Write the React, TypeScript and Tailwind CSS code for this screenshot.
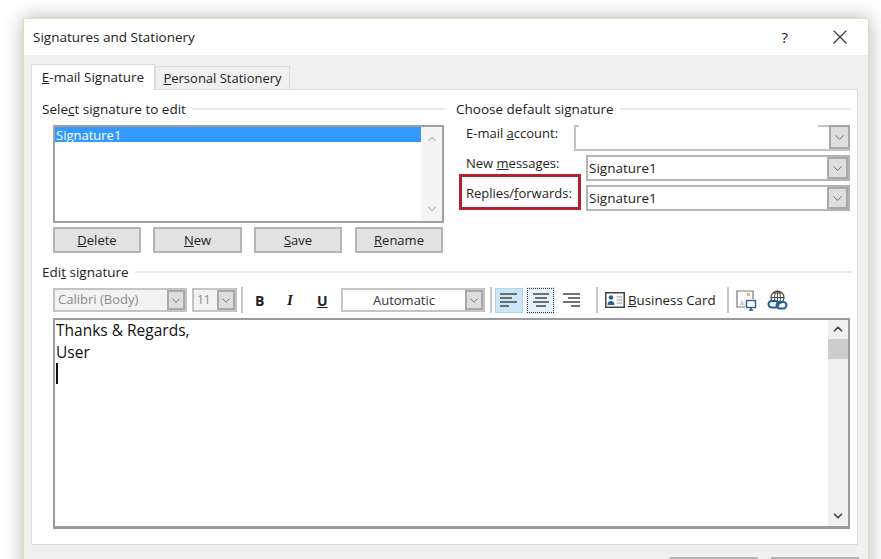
import { ChevronDown, ChevronUp, X } from 'lucide-react';

const font = "font-['Open_Sans','Noto_Sans',sans-serif]";

function SectionHeading({ children }: { children: React.ReactNode }) {
  return (
    <div className="flex h-[16px] items-center gap-[6px] text-[13.5px] leading-[16px] text-[#222]">
      <span className="whitespace-nowrap">{children}</span>
      <div className="h-[2px] flex-1 bg-[#e8e8e8]" />
    </div>
  );
}

function PushButton({ className, children }: { className: string; children: React.ReactNode }) {
  return (
    <button className={`flex h-[26px] items-center justify-center border-2 border-[#b4b4b4] bg-[#e2e2e2] pt-[1px] text-[13px] text-[#222] ${className}`}>
      {children}
    </button>
  );
}

function DropArrow({ className = 'w-[21px]' }: { className?: string }) {
  return (
    <div className={`flex shrink-0 items-center justify-center self-stretch border-2 border-[#a8a8a8] bg-[#dedede] ${className}`}>
      <ChevronDown className="h-[15px] w-[15px] text-[#666]" strokeWidth={1.5} />
    </div>
  );
}

function Combo({ value }: { value: string }) {
  return (
    <div className="ml-[6px] flex h-[26px] flex-1 border-2 border-[#b4b4b4] bg-white">
      <span className="flex-1 pl-[1px] text-[13.5px] leading-[23px] text-[#222]">{value}</span>
      <DropArrow />
    </div>
  );
}

function Separator({ className }: { className: string }) {
  return <div className={`h-[26px] w-[2px] shrink-0 bg-[#c8c8c8] ${className}`} />;
}

function AlignIcon({ lines }: { lines: [number, number][] }) {
  return (
    <svg width="18" height="14" viewBox="0 0 18 14" stroke="#444" strokeWidth="1.5">
      {lines.map(([x1, x2], i) => (
        <line key={i} x1={x1} x2={x2} y1={1 + i * 4} y2={1 + i * 4} />
      ))}
    </svg>
  );
}

export default function App() {
  return (
    <div className={`h-[559px] w-[881px] overflow-hidden bg-white pl-[23px] pt-[18px] ${font}`}>
      <div className="relative h-[600px] w-[846px] border border-[#e9dcae] bg-[#f0f0f0] shadow-[0_0_18px_rgba(0,0,0,0.3)]">
        {/* title bar */}
        <div className="flex h-[36px] items-center bg-white pl-[9px] text-[13.5px] text-[#222]">
          <span className="flex-1">Signatures and Stationery</span>
          <span className="mr-[40px] text-[15px]">?</span>
          <X className="mr-[16px] h-[24px] w-[24px] text-[#333]" strokeWidth={1.2} />
        </div>

        {/* tabs */}
        <div className="flex h-[34px] items-end pl-[7px]">
          <div className="z-10 -mb-px flex h-[26px] w-[124px] items-center justify-center border border-b-0 border-[#dcdcdc] bg-white text-[13.5px] text-[#222]">
            <span><u>E</u>-mail Signature</span>
          </div>
          <div className="flex h-[23px] w-[135px] items-center justify-center border border-b-0 border-[#dcdcdc] bg-[#f0f0f0] pt-[2px] text-[13px] text-[#222]">
            <span><u>P</u>ersonal Stationery</span>
          </div>
        </div>

        {/* panel */}
        <div className="ml-[7px] h-[456px] w-[827px] border border-[#dcdcdc] bg-white pl-[10px] pt-[11px]">
          <div className="flex">
            {/* select signature */}
            <div className="w-[403px]">
              <SectionHeading>Sele<u>c</u>t signature to edit</SectionHeading>
              <div className="ml-[11px] mt-[8px] w-[391px]">
                <div className="flex h-[98px] border-2 border-[#a0a0a0] bg-white">
                  <div className="flex-1">
                    <div className="h-[15px] bg-[#3399ff] pl-[1px] text-[13px] leading-[17px] text-white">Signature1</div>
                  </div>
                  <div className="flex w-[21px] flex-col items-center justify-between bg-[#f4f4f4] py-[5px]">
                    <ChevronUp className="h-[14px] w-[14px] text-[#c0c0c0]" strokeWidth={2} />
                    <ChevronDown className="h-[14px] w-[14px] text-[#c0c0c0]" strokeWidth={2} />
                  </div>
                </div>
                <div className="mt-[4px] flex">
                  <PushButton className="w-[88px]"><span><u>D</u>elete</span></PushButton>
                  <PushButton className="ml-[12px] w-[89px]"><span><u>N</u>ew</span></PushButton>
                  <PushButton className="ml-[12px] w-[88px]"><span><u>S</u>ave</span></PushButton>
                  <PushButton className="ml-[13px] w-[88px]"><span><u>R</u>ename</span></PushButton>
                </div>
              </div>
            </div>

            {/* default signature */}
            <div className="ml-[11px] w-[395px]">
              <SectionHeading>Choose default signature</SectionHeading>
              <div className="relative ml-[10px] mt-[8px] w-[384px]">
                <div className="flex h-[26px]">
                  <span className="w-[108px] text-[13px] leading-[16px] text-[#222]">E-mail <u>a</u>ccount:</span>
                  <div className="flex flex-1 border-b-2 border-l-2 border-[#c4c4c4] bg-white">
                    <div className="flex h-[2px] flex-1 justify-between">
                      <div className="w-[3px] bg-[#c4c4c4]" />
                      <div className="w-[11px] bg-[#c4c4c4]" />
                    </div>
                    <DropArrow />
                  </div>
                </div>
                <div className="mt-[4px] flex h-[26px]">
                  <span className="w-[114px] text-[13px] leading-[16px] text-[#222]">New <u>m</u>essages:</span>
                  <Combo value="Signature1" />
                </div>
                <div className="mt-[4px] flex h-[26px]">
                  <span className="w-[114px] text-[13px] leading-[16px] text-[#222]">Replies/<u>f</u>orwards:</span>
                  <Combo value="Signature1" />
                </div>
                {/* red highlight */}
                <div className="absolute left-[-7px] top-[49px] h-[36px] w-[122px] border-[3px] border-[#b5202e]" />
              </div>
            </div>
          </div>

          {/* edit signature */}
          <div className="mt-[11px] w-[809px]">
            <SectionHeading>Edi<u>t</u> signature</SectionHeading>
            <div className="ml-[11px] mt-[8px] flex h-[24px] items-center text-[#222]">
              <div className="flex h-[24px] w-[134px] border-2 border-[#c4c4c4] bg-[#f2f2f2]">
                <span className="flex-1 pl-[3px] text-[13px] leading-[19px] text-[#8c8c8c]">Calibri (Body)</span>
                <DropArrow className="w-[18px]" />
              </div>
              <div className="ml-[5px] flex h-[24px] w-[45px] border-2 border-[#c4c4c4] bg-[#f2f2f2]">
                <span className="flex-1 pl-[3px] text-[12px] leading-[19px] text-[#8c8c8c]">11</span>
                <DropArrow className="w-[18px]" />
              </div>
              <Separator className="ml-[4px]" />
              <span className="ml-[12px] w-[9px] text-[14px] font-bold">B</span>
              <span className="ml-[23px] w-[8px] font-['Liberation_Serif',serif] text-[15px] font-bold italic">I</span>
              <span className="ml-[22px] w-[10px] text-[14px] font-bold underline">U</span>
              <div className="ml-[14px] flex h-[24px] w-[144px] border-2 border-[#c4c4c4] bg-white">
                <span className="flex-1 text-center text-[13px] leading-[21px] text-[#333]">Automatic</span>
                <DropArrow className="w-[18px]" />
              </div>
              <Separator className="ml-[5px]" />
              <div className="ml-[3px] flex h-[25px] w-[28px] items-center justify-center border border-[#a8d4f5] bg-[#cde6f7]">
                <AlignIcon lines={[[0, 17], [0, 12], [0, 17], [0, 9]]} />
              </div>
              <div className="ml-[4px] flex h-[25px] w-[27px] items-center justify-center border border-dotted border-[#333] bg-[#e5f1fb] outline outline-1 outline-[#e5f1fb]">
                <AlignIcon lines={[[1, 17], [3, 15], [1, 17], [4, 14]]} />
              </div>
              <div className="ml-[4px] flex h-[25px] w-[26px] items-center justify-center">
                <AlignIcon lines={[[1, 18], [6, 18], [1, 18], [9, 18]]} />
              </div>
              <Separator className="ml-[12px]" />
              <svg className="ml-[7px] shrink-0" width="20" height="16" viewBox="0 0 20 16" fill="none">
                <rect x="0.75" y="0.75" width="18.5" height="14.5" stroke="#444" strokeWidth="1.5" />
                <circle cx="6" cy="5.5" r="2.2" fill="#2b5f8f" />
                <path d="M2.5 13c0-3 1.5-4 3.5-4s3.5 1 3.5 4z" fill="#2b5f8f" />
                <path d="M11.5 5h6M11.5 8h6M11.5 11h6" stroke="#999" />
              </svg>
              <span className="ml-[3px] w-[87px] whitespace-nowrap pt-[2px] text-[13.3px]"><u>B</u>usiness Card</span>
              <Separator className="ml-[12px]" />
              <svg className="ml-[7px] shrink-0" width="21" height="21" viewBox="0 0 21 21" fill="none">
                <path d="M17 9V1H1v16h8" stroke="#777" strokeWidth="1.2" fill="#fff" />
                <path d="M3 15l3-5 3 5z" fill="#c4d3e2" />
                <rect x="11" y="3" width="3" height="3" fill="#f0b070" />
                <rect x="10.5" y="10.5" width="9" height="7" fill="#fff" stroke="#2b5f8f" strokeWidth="1.4" />
                <path d="M13 20h4M15 18v2" stroke="#2b5f8f" strokeWidth="1.5" />
              </svg>
              <svg className="ml-[10px] shrink-0" width="21" height="21" viewBox="0 0 21 21" fill="none">
                <circle cx="10.5" cy="7.5" r="6.5" stroke="#444" strokeWidth="1.2" />
                <path d="M4 7.5h13M10.5 1v13M6 3h9" stroke="#444" strokeWidth="1" />
                <ellipse cx="10.5" cy="7.5" rx="3" ry="6.5" stroke="#444" strokeWidth="1" />
                <rect x="1.5" y="11" width="10" height="6.5" rx="3.2" fill="#fff" stroke="#1f5c99" strokeWidth="2" />
                <rect x="9.5" y="12" width="10" height="6.5" rx="3.2" stroke="#1f5c99" strokeWidth="2" />
              </svg>
            </div>

            <div className="ml-[11px] mt-[6px] flex h-[211px] w-[797px] border-2 border-b-[3px] border-[#9a9a9f] bg-white">
              <div className="flex-1 pl-[1px] text-[15.5px] leading-[22px] text-[#111]">
                <div className="-mt-[1px]">Thanks &amp; Regards,</div>
                <div>User</div>
                <div className="h-[21px] w-[2px] bg-[#111]" />
              </div>
              <div className="flex w-[20px] flex-col items-center bg-[#f0f0f0]">
                <ChevronUp className="mt-[2px] h-[14px] w-[14px] text-[#444]" strokeWidth={3} />
                <div className="mt-[3px] h-[20px] w-full bg-[#cdcdcd]" />
                <div className="flex-1" />
                <ChevronDown className="mb-[3px] h-[14px] w-[14px] text-[#444]" strokeWidth={3} />
              </div>
            </div>
          </div>
        </div>

        {/* footer buttons, cut off by the bottom of the shot */}
        <div className="mt-[12px] flex justify-end gap-[13px] pr-[9px]">
          <div className="h-[26px] w-[88px] border-2 border-[#b4b4b4] bg-[#e2e2e2]" />
          <div className="h-[26px] w-[88px] border-2 border-[#b4b4b4] bg-[#e2e2e2]" />
        </div>
      </div>
    </div>
  );
}
